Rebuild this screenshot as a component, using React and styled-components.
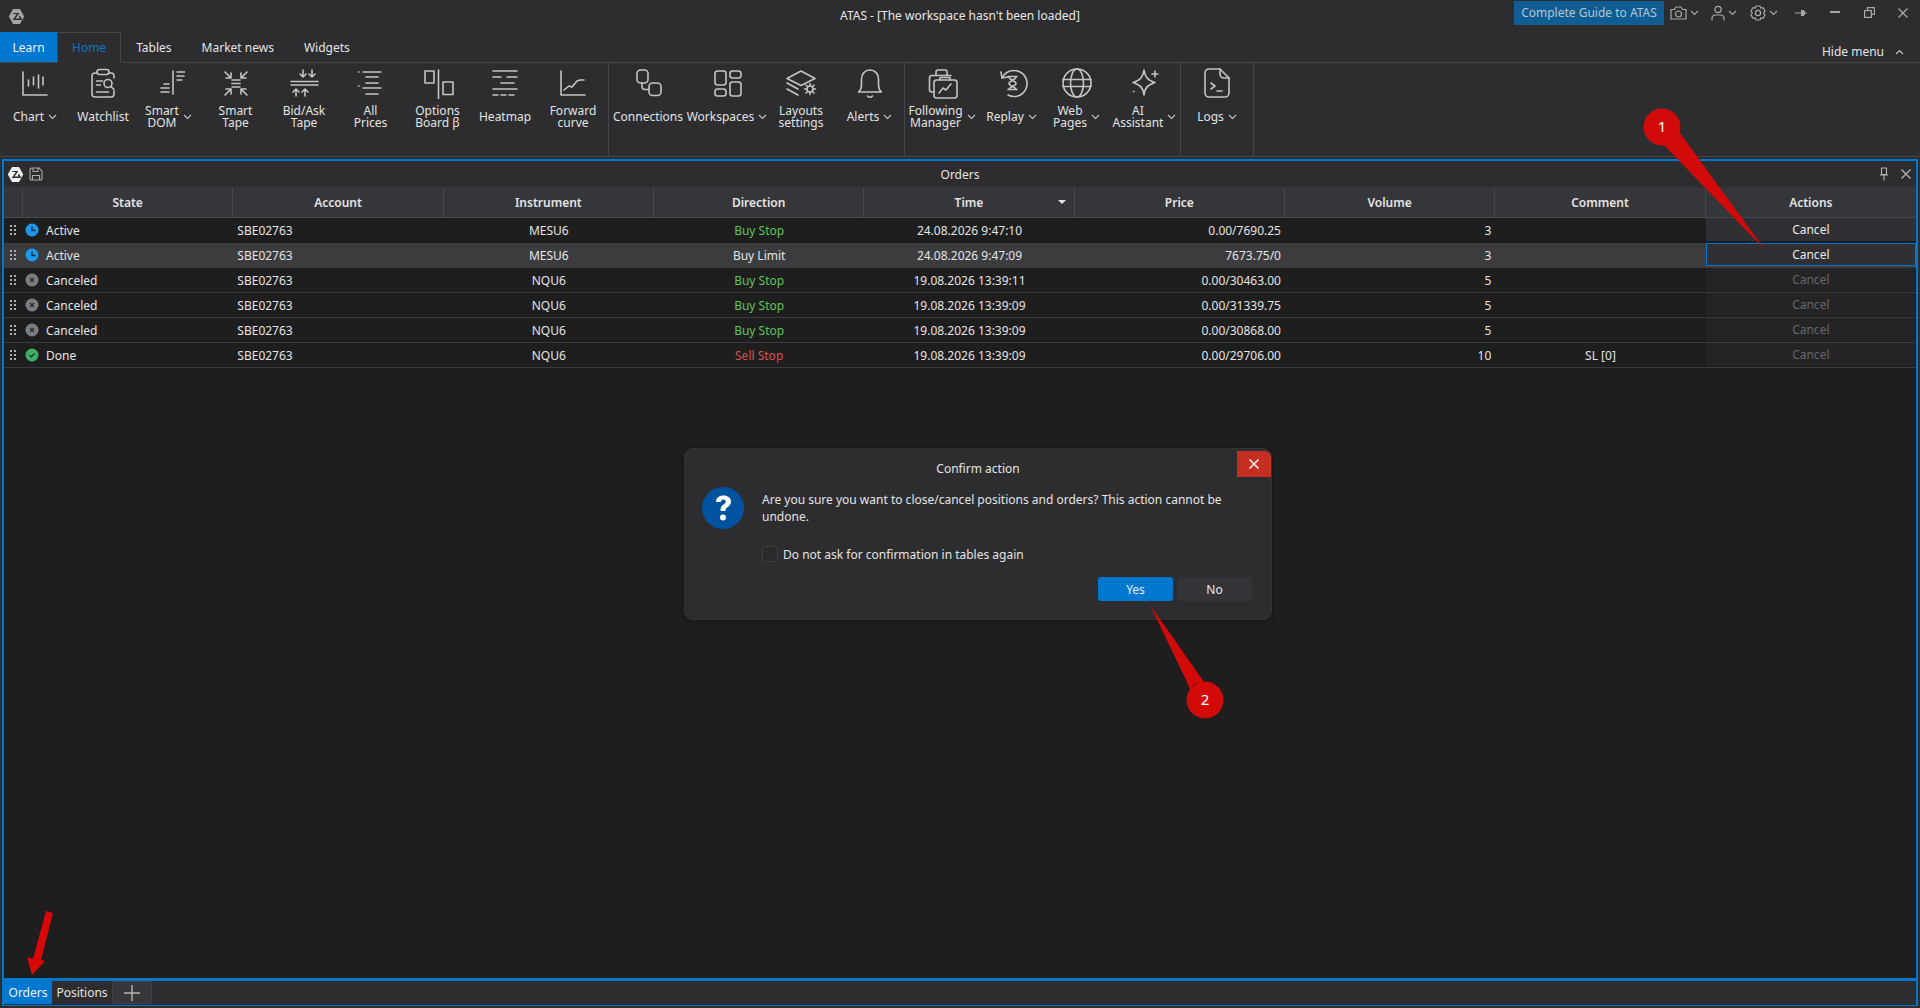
import React from 'react'
import styled, { createGlobalStyle } from 'styled-components'

const GlobalStyle = createGlobalStyle`
html, body {
  margin: 0;
  padding: 0;
  background: #2d2d30;
}
body {
  font-family: "Noto Sans", "Open Sans", sans-serif;
  font-size: 12px;
  color: #e4e4e4;
}
* { box-sizing: border-box; }
`

const Page = styled.div`
position: relative;
width: 1920px;
height: 1008px;
overflow: hidden;
display: flex;
flex-direction: column;
background: #2d2d30;
`
const TitleBar = styled.div`
height: 32px;
display: grid;
grid-template-columns: 1fr auto 1fr;
align-items: center;
`
const TitleLeft = styled.div`
display: flex;
align-items: center;
padding-left: 8px;
`
const TitleText = styled.div`
color: #e8e8e8;
margin-top: -2px;
`
const TitleRight = styled.div`
display: flex;
justify-content: flex-end;
align-items: center;
height: 32px;
padding-bottom: 7px;
`
const GuideButton = styled.div`
width: 150px;
height: 24px;
background: #0f5d92;
color: #b4c6d2;
display: flex;
align-items: center;
justify-content: center;
`
const TitleMenu = styled.div`
width: 40px;
display: flex;
align-items: center;
justify-content: center;
gap: 3px;
`
const WindowButton = styled.div`
width: 34px;
display: flex;
align-items: center;
justify-content: center;
`
const TabRow = styled.div`
height: 31px;
display: flex;
border-bottom: 1px solid #45464a;
`
const Tab = styled.div`
height: 31px;
padding: 0 14px;
display: flex;
align-items: center;
color: ${p => p.$active ? '#0c74c4' : '#e4e4e4'};
background: ${p => p.$active ? '#2d2d30' : 'transparent'};
border: 1px solid ${p => p.$active ? '#45464a' : 'transparent'};
border-bottom-color: ${p => p.$active ? '#2d2d30' : 'transparent'};
`
const LearnTab = styled.div`
width: 57px;
height: 30px;
background: #0078d0;
color: #f2f2f2;
display: flex;
align-items: center;
justify-content: center;
`
const HideMenu = styled.div`
margin-left: auto;
display: flex;
align-items: center;
gap: 11px;
padding: 9px 16px 0 0;
color: #e4e4e4;
`
const Ribbon = styled.div`
height: 94px;
display: flex;
border-bottom: 1px solid #45464a;
`
const RibbonGroup = styled.div`
display: flex;
height: 100%;
border-right: 1px solid #45464a;
`
const RibbonItem = styled.div`
width: ${p => p.$w}px;
display: flex;
flex-direction: column;
align-items: center;
padding-top: 4px;
`
const IconSvg = styled.svg.attrs({ viewBox: '0 0 32 32', fill: 'none' })`
width: 32px;
height: 32px;
stroke: #c4c4c4;
stroke-width: 1.6;
stroke-linecap: round;
stroke-linejoin: round;
flex: none;
`
const RibbonLabel = styled.div`
height: 36px;
display: flex;
align-items: center;
gap: 4px;
line-height: 12px;
text-align: center;
color: #e2e2e2;
white-space: pre-line;
`
const Workspace = styled.div`
flex: none;
height: 847px;
margin: 2px 2px 0;
border: 2px solid #0078d0;
border-bottom-width: 1px;
display: flex;
flex-direction: column;
`
const Panel = styled.div`
flex: 1;
display: flex;
flex-direction: column;
background: #1e1e1e;
border-bottom: 3px solid #0078d0;
`
const PanelHeader = styled.div`
height: 26px;
background: #2d2d30;
display: grid;
grid-template-columns: 1fr auto 1fr;
align-items: center;
`
const PanelTools = styled.div`
display: flex;
align-items: center;
gap: 5px;
padding-left: 3px;
`
const PanelTitle = styled.div`
color: #e2e2e2;
`
const PanelActions = styled.div`
display: flex;
justify-content: flex-end;
align-items: center;
gap: 11px;
padding-right: 5px;
`
const Row = styled.div`
display: grid;
grid-template-columns: 19px repeat(9, 1fr);
height: 25px;
background: ${p => p.$selected ? '#3c3c3f' : '#1e1e1e'};
border-bottom: 1px solid ${p => p.$line ? '#3a3a3c' : 'transparent'};
`
const HeaderRow = styled(Row)`
height: 31px;
background: #35363a;
border-bottom: 1px solid #48494d;
`
const HeaderCell = styled.div`
position: relative;
display: flex;
align-items: center;
justify-content: center;
font-weight: 600;
color: #e4e4e4;
border-right: 1px solid #47484c;
&:last-child { border-right: none; }
`
const SortMark = styled.div`
position: absolute;
right: 8px;
top: 13px;
border-left: 4px solid transparent;
border-right: 4px solid transparent;
border-top: 4px solid #e4e4e4;
`
const Cell = styled.div`
display: flex;
align-items: center;
padding: 0 4px;
color: ${p => p.$color || '#e4e4e4'};
justify-content: ${p => p.$align || 'center'};
`
const StateCell = styled(Cell)`
padding: 0 0 0 2px;
gap: 7px;
justify-content: flex-start;
`
const GripCell = styled(Cell)`
padding: 0 0 0 6px;
justify-content: flex-start;
`
const ActionCell = styled.div`
display: flex;
align-items: center;
justify-content: center;
margin: 0 0 1px;
background: ${p => p.$focus ? '#303034' : p.$off ? '#242426' : '#303034'};
color: ${p => p.$off ? '#666668' : '#e8e8e8'};
border: 1px solid ${p => p.$focus ? '#0078d0' : 'transparent'};
`
const TabBar = styled.div`
height: 24px;
background: #2d2d30;
display: flex;
`
const SheetTab = styled.div`
width: ${p => p.$w}px;
height: 23px;
display: flex;
align-items: center;
justify-content: center;
color: ${p => p.$active ? '#f0f0f0' : '#e4e4e4'};
background: ${p => p.$active ? '#0078d0' : 'transparent'};
`
const AddTab = styled.div`
width: 40px;
height: 23px;
background: #37373b;
border: 1px solid #414145;
display: flex;
align-items: center;
justify-content: center;
`
const Dialog = styled.div`
position: absolute;
left: 684px;
top: 448px;
width: 588px;
height: 172px;
background: #2d2d30;
border: 1px solid #333336;
border-radius: 9px;
box-shadow: 0 0 6px rgba(0, 0, 0, 0.35);
display: flex;
flex-direction: column;
`
const DialogClose = styled.div`
position: absolute;
top: 2px;
right: 0;
width: 34px;
height: 26px;
background: #c42f20;
border-top-right-radius: 6px;
display: flex;
align-items: center;
justify-content: center;
`
const DialogTitle = styled.div`
height: 36px;
padding-top: 2px;
display: flex;
align-items: center;
justify-content: center;
color: #e4e4e4;
`
const DialogBody = styled.div`
display: flex;
align-items: center;
gap: 18px;
padding: 0 0 0 17px;
height: 44px;
margin-top: 1px;
`
const DialogCheckRow = styled.div`
display: flex;
align-items: center;
gap: 5px;
padding-left: 77px;
margin-top: 1px;
height: 24px;
margin-top: 12px;
`
const CheckBox = styled.div`
width: 16px;
height: 16px;
border: 1px solid #3f3f43;
border-radius: 3px;
background: #2a2a2d;
`
const DialogButtons = styled.div`
display: flex;
justify-content: flex-end;
gap: 4px;
padding-right: 19px;
margin-top: 11px;
`
const DialogButton = styled.div`
width: 75px;
height: 24px;
border-radius: 3px;
display: flex;
align-items: center;
justify-content: center;
background: ${p => p.$primary ? '#0078d0' : '#343438'};
color: #ececec;
`
const Annotations = styled.svg`
position: absolute;
left: 0;
top: 0;
width: 1920px;
height: 1008px;
pointer-events: none;
`
const PinNumber = styled.text`
fill: #fff;
font-size: 15px;
font-family: "Noto Sans", sans-serif;
text-anchor: middle;
`

const Chevron = ({ up, color = '#c4c4c4' }) => (
  <svg width="9" height="6" viewBox="0 0 9 6" fill="none" style={{ flex: 'none' }}>
    <path d={up ? 'M1 5l3.5-3.5L8 5' : 'M1 1l3.5 3.5L8 1'} stroke={color} strokeWidth="1.1" />
  </svg>
)

const Logo = ({ color }) => (
  <svg width="17" height="17" viewBox="0 0 17 17">
    <path d="M5 1h7l4.2 7.5L12 16H5L.8 8.500z" fill={color} />
    <path d="M5.500 5h5.800L7.500 10.500h4.200l-.9-1.700 1.500-.8 2 4H4.800l4-6H5z" fill="#2d2d30" />
  </svg>
)

const icons = {
  chart: <><path d="M4 5v23h24" /><path d="M9.500 13v6M14.500 10v8M19.500 8v13M24 10v8" /></>,
  watchlist: <><path d="M10 6H8a3 3 0 0 0-3 3v18a3 3 0 0 0 3 3h16a3 3 0 0 0 3-3v-3M22 6h2a3 3 0 0 1 3 3v2" /><rect x="10" y="2.500" width="12" height="5" rx="2.500" /><path d="M9.500 14h6M9.500 18h4M9.500 25h12" /><circle cx="21" cy="16.500" r="4" /><path d="M24 19.500l3 3" /></>,
  smartDom: <><path d="M20 4v23" /><path d="M24 5h8M24 9h7M24 13h5M11 17h5M8 21h8M8 25h8" /></>,
  smartTape: <><path d="M5 5l6 6M6 11h5V6M27 5l-6 6M26 11h-5V6M5 28l6-6M6 22h5v5M27 28l-6-6M26 22h-5v5" /><path d="M12 13h8M12 16.500h8M12 20h8" /></>,
  bidAsk: <><path d="M3 14.500h27M3 18h27" /><path d="M15 3v7M12 7l3 3 3-3M24 3v7M21 7l3 3 3-3M8 29v-7M5 25l3-3 3 3M17 29v-7M14 25l3-3 3 3" /></>,
  allPrices: <><path d="M8 5h18M11 10h12M11 16h12M8 21h18M11 27h12" /><path d="M3.500 5h.5M3.500 19h.5" /></>,
  options: <><rect x="3" y="4" width="9" height="12" /><path d="M16.500 3v29" /><rect x="21" y="15" width="10" height="12.500" /></>,
  heatmap: <><path d="M4 4h24M4 10h8M18 10h10M12 16h13M4 22h24M4 28h5M12 28h5M20 28h5" /></>,
  forward: <><path d="M4 4v24h24" /><path d="M7 23l5-4 3 1 5-6 3-1h4" /></>,
  connections: <><rect x="5" y="3" width="11" height="13" rx="3.500" /><rect x="17" y="16" width="12" height="12.500" rx="3.500" /><path d="M10 16v3.500c0 2 1 3 3 3h4" /></>,
  workspaces: <><rect x="4" y="4" width="11" height="14" rx="2.500" /><rect x="19" y="4" width="11" height="7" rx="2.500" /><rect x="4" y="22" width="11" height="7" rx="2.500" /><rect x="19" y="15" width="11" height="14" rx="2.500" /></>,
  layouts: <><path d="M16 4l14 7.500-14 7-14-7z" /><path d="M2 16l11 6M2 22l11 6M2 28" /><circle cx="25" cy="22" r="3" /><path d="M25 16.500v2M25 25.500v2M19.500 22h2M28.500 22h2M21 18l1.500 1.500M27.500 24.500L29 26M21 26l1.500-1.500M27.500 19.500L29 18" /></>,
  alerts: <><path d="M4.500 25c2.500-2 3-4 3-7v-6c0-5 3.500-9 8.500-9s8.500 4 8.500 9v6c0 3 .5 5 3 7z" /><path d="M13.500 29c1.500 1.500 3.500 1.500 5 0" /></>,
  following: <><path d="M8 25H6a2.500 2.500 0 0 1-2.500-2.500V11A2.500 2.500 0 0 1 6 8.500h19" /><path d="M10 8V5a2 2 0 0 1 2-2h7a2 2 0 0 1 2 2v3" /><rect x="8" y="13" width="23" height="18" rx="2.500" /><path d="M14 13v-2.500h10V13" /><path d="M13 26l4-5 3 2 5-6" /></>,
  replay: <><path d="M5 5l1 6 6-1" /><path d="M6.500 10.500A13 13 0 1 1 12 28" /><path d="M12 9.500h9M12 22.500h9M13 10c0 3 7 4 7 6.500s-7 3.500-7 6M20 10c0 3-7 4-7 6.500s7 3.500 7 6" /></>,
  web: <><circle cx="16" cy="16" r="14" /><path d="M2 12.500h28M2 19.500h28" /><ellipse cx="16" cy="16" rx="6.500" ry="14" /></>,
  ai: <><path d="M15 3c1 7 3.500 10 11 12.500-7.500 2.500-10 5-11 12.500-1-7.500-3.500-10-11-12.500C11.500 13 14 10 15 3z" /><path d="M26 4v6M23 7h6" /><path d="M4.500 24.500h.5" /></>,
  logs: <><path d="M19 2H8a4 4 0 0 0-4 4v20a4 4 0 0 0 4 4h16a4 4 0 0 0 4-4V11z" /><path d="M19 2v5a4 4 0 0 0 4 4h5" /><path d="M10 16l4 3-4 3M16 24h5" /></>,
}

const groups = [
  [
    { w: 70, icon: 'chart', label: 'Chart', menu: true },
    { w: 66, icon: 'watchlist', label: 'Watchlist' },
    { w: 65, icon: 'smartDom', label: 'Smart\nDOM', menu: true },
    { w: 69, icon: 'smartTape', label: 'Smart\nTape' },
    { w: 68, icon: 'bidAsk', label: 'Bid/Ask\nTape' },
    { w: 65, icon: 'allPrices', label: 'All\nPrices' },
    { w: 69, icon: 'options', label: 'Options\nBoard β' },
    { w: 66, icon: 'heatmap', label: 'Heatmap' },
    { w: 70, icon: 'forward', label: 'Forward\ncurve' },
  ],
  [
    { w: 78, icon: 'connections', label: 'Connections' },
    { w: 80, icon: 'workspaces', label: 'Workspaces', menu: true },
    { w: 68, icon: 'layouts', label: 'Layouts\nsettings' },
    { w: 69, icon: 'alerts', label: 'Alerts', menu: true },
  ],
  [
    { w: 74, icon: 'following', label: 'Following\nManager', menu: true },
    { w: 65, icon: 'replay', label: 'Replay', menu: true },
    { w: 65, icon: 'web', label: 'Web\nPages', menu: true },
    { w: 71, icon: 'ai', label: 'AI\nAssistant', menu: true },
  ],
  [
    { w: 72, icon: 'logs', label: 'Logs', menu: true },
  ],
]

const columns = ['State', 'Account', 'Instrument', 'Direction', 'Time', 'Price', 'Volume', 'Comment', 'Actions']

const orders = [
  { state: 'active', label: 'Active', inst: 'MESU6', dir: 'Buy Stop', time: '24.08.2026 9:47:10', price: '0.00/7690.25', vol: 3 },
  { state: 'active', label: 'Active', inst: 'MESU6', dir: 'Buy Limit', time: '24.08.2026 9:47:09', price: '7673.75/0', vol: 3, selected: true },
  { state: 'canceled', label: 'Canceled', inst: 'NQU6', dir: 'Buy Stop', time: '19.08.2026 13:39:11', price: '0.00/30463.00', vol: 5 },
  { state: 'canceled', label: 'Canceled', inst: 'NQU6', dir: 'Buy Stop', time: '19.08.2026 13:39:09', price: '0.00/31339.75', vol: 5 },
  { state: 'canceled', label: 'Canceled', inst: 'NQU6', dir: 'Buy Stop', time: '19.08.2026 13:39:09', price: '0.00/30868.00', vol: 5 },
  { state: 'done', label: 'Done', inst: 'NQU6', dir: 'Sell Stop', time: '19.08.2026 13:39:09', price: '0.00/29706.00', vol: 10, comment: 'SL [0]' },
]

const dirColor = d => d === 'Buy Stop' ? '#5fc45a' : d === 'Sell Stop' ? '#d9534f' : '#e4e4e4'

function Grip() {
  return (
    <svg width="6" height="12" viewBox="0 0 6 12" fill="#b0b0b0">
      <rect x="0" y="1" width="2" height="2" /><rect x="4" y="1" width="2" height="2" />
      <rect x="0" y="5" width="2" height="2" /><rect x="4" y="5" width="2" height="2" />
      <rect x="0" y="9" width="2" height="2" /><rect x="4" y="9" width="2" height="2" />
    </svg>
  )
}

function StateIcon({ state }) {
  if (state === 'active') {
    return (
      <svg width="14" height="14" viewBox="0 0 14 14">
        <circle cx="7" cy="7" r="6.500" fill="#1a9bf0" />
        <path d="M7 3.500V7.500H10.500" stroke="#16263a" strokeWidth="1.300" fill="none" />
      </svg>
    )
  }
  if (state === 'canceled') {
    return (
      <svg width="14" height="14" viewBox="0 0 14 14">
        <circle cx="7" cy="7" r="6.500" fill="#7c7f82" />
        <path d="M5 5l4 4M9 5l-4 4" stroke="#26282a" strokeWidth="1.200" />
      </svg>
    )
  }
  return (
    <svg width="14" height="14" viewBox="0 0 14 14">
      <circle cx="7" cy="7" r="6.500" fill="#3fae67" />
      <path d="M4.500 7.200l1.800 1.800 3.400-3.600" stroke="#16301f" strokeWidth="1.200" fill="none" />
    </svg>
  )
}

function TitleIcons() {
  const s = { stroke: '#a8a8a8', strokeWidth: 1.2, fill: 'none' }
  return (
    <>
      <TitleMenu>
        <svg width="17" height="14" viewBox="0 0 17 14" {...s}>
          <path d="M1 3.500h3.500L6 1h5l1.500 2.500H16v9.500H1z" /><circle cx="8.500" cy="8" r="3" />
        </svg>
        <Chevron color="#a8a8a8" />
      </TitleMenu>
      <TitleMenu>
        <svg width="14" height="16" viewBox="0 0 14 16" {...s}>
          <circle cx="7" cy="4.500" r="3.200" /><path d="M1 15.500v-2c0-2 1.500-3.500 3.500-3.500h5c2 0 3.500 1.500 3.500 3.500v2" />
        </svg>
        <Chevron color="#a8a8a8" />
      </TitleMenu>
      <TitleMenu>
        <svg width="16" height="16" viewBox="0 0 16 16" {...s}>
          <path d="M6 1h4l.8 2 2.200-.3L15 6l-1.300 2L15 10l-2 3.300-2.200-.3-.8 2H6l-.8-2-2.200.3L1 10l1.300-2L1 6l2-3.300 2.200.3z" /><circle cx="8" cy="8" r="2.600" />
        </svg>
        <Chevron color="#a8a8a8" />
      </TitleMenu>
      <WindowButton>
        <svg width="12" height="8" viewBox="0 0 12 8" fill="#a8a8a8">
          <rect x="0" y="3.500" width="12" height="1" /><rect x="6" y="1" width="3" height="6" /><rect x="9" y="2" width="1" height="4" />
        </svg>
      </WindowButton>
      <WindowButton>
        <svg width="10" height="3" viewBox="0 0 10 3"><rect width="10" height="2" fill="#a8a8a8" /></svg>
      </WindowButton>
      <WindowButton>
        <svg width="11" height="11" viewBox="0 0 11 11" {...s}>
          <rect x=".600" y="3.600" width="6.800" height="6.800" /><path d="M3.500 3.500V.6h6.900v6.800H7.500" />
        </svg>
      </WindowButton>
      <WindowButton>
        <svg width="10" height="10" viewBox="0 0 10 10" stroke="#a8a8a8" strokeWidth="1.300">
          <path d="M.5.500l9 9M9.500.500l-9 9" />
        </svg>
      </WindowButton>
    </>
  )
}

export default function App() {
  return (
    <Page>
      <GlobalStyle />
      <TitleBar>
        <TitleLeft><Logo color="#a4a4a4" /></TitleLeft>
        <TitleText>ATAS - [The workspace hasn't been loaded]</TitleText>
        <TitleRight>
          <GuideButton>Complete Guide to ATAS</GuideButton>
          <TitleIcons />
        </TitleRight>
      </TitleBar>
      <TabRow>
        <LearnTab>Learn</LearnTab>
        <Tab $active>Home</Tab>
        <Tab>Tables</Tab>
        <Tab>Market news</Tab>
        <Tab>Widgets</Tab>
        <HideMenu>Hide menu <Chevron up /></HideMenu>
      </TabRow>
      <Ribbon>
        {groups.map((items, g) => (
          <RibbonGroup key={g}>
            {items.map(item => (
              <RibbonItem key={item.label} $w={item.w}>
                <IconSvg>{icons[item.icon]}</IconSvg>
                <RibbonLabel>
                  <span>{item.label}</span>
                  {item.menu && <Chevron />}
                </RibbonLabel>
              </RibbonItem>
            ))}
          </RibbonGroup>
        ))}
      </Ribbon>
      <Workspace>
        <Panel>
          <PanelHeader>
            <PanelTools>
              <Logo color="#efefef" />
              <svg width="14" height="14" viewBox="0 0 14 14" fill="none" stroke="#a8a8a8" strokeWidth="1.100">
                <path d="M1 3a2 2 0 0 1 2-2h7l3 3v7a2 2 0 0 1-2 2H3a2 2 0 0 1-2-2z" />
                <path d="M4 1v3.500h5V1M3.500 13V8.500h7V13" />
              </svg>
            </PanelTools>
            <PanelTitle>Orders</PanelTitle>
            <PanelActions>
              <svg width="12" height="14" viewBox="0 0 12 14" fill="none" stroke="#b4b4b4" strokeWidth="1.100">
                <path d="M3.500 1h5v6.500h-5zM2 8h8M6 8v5.500" />
              </svg>
              <svg width="10" height="10" viewBox="0 0 10 10" stroke="#b4b4b4" strokeWidth="1.300">
                <path d="M.5.500l9 9M9.500.500l-9 9" />
              </svg>
            </PanelActions>
          </PanelHeader>
          <HeaderRow>
            <HeaderCell />
            {columns.map(c => (
              <HeaderCell key={c}>
                {c}
                {c === 'Time' && <SortMark />}
              </HeaderCell>
            ))}
          </HeaderRow>
          {orders.map((o, i) => (
            <Row key={i} $selected={o.selected} $line={i > 1}>
              <GripCell><Grip /></GripCell>
              <StateCell>
                <StateIcon state={o.state} />
                {o.label}
              </StateCell>
              <Cell $align="flex-start">SBE02763</Cell>
              <Cell>{o.inst}</Cell>
              <Cell $color={dirColor(o.dir)}>{o.dir}</Cell>
              <Cell>{o.time}</Cell>
              <Cell $align="flex-end">{o.price}</Cell>
              <Cell $align="flex-end">{o.vol}</Cell>
              <Cell>{o.comment}</Cell>
              <ActionCell $focus={o.selected} $off={i > 1}>Cancel</ActionCell>
            </Row>
          ))}
        </Panel>
        <TabBar>
          <SheetTab $w={48} $active>Orders</SheetTab>
          <SheetTab $w={60}>Positions</SheetTab>
          <AddTab>
            <svg width="16" height="16" viewBox="0 0 16 16" stroke="#b4b4b4" strokeWidth="1.400">
              <path d="M8 0v16M0 8h16" />
            </svg>
          </AddTab>
        </TabBar>
      </Workspace>

      <Dialog>
        <DialogClose>
          <svg width="10" height="10" viewBox="0 0 10 10" stroke="#f4f4f4" strokeWidth="1.500">
            <path d="M.5.500l9 9M9.500.500l-9 9" />
          </svg>
        </DialogClose>
        <DialogTitle>Confirm action</DialogTitle>
        <DialogBody>
          <svg width="42" height="42" viewBox="0 0 42 42" style={{ flex: 'none' }}>
            <circle cx="21" cy="21" r="21" fill="#02539f" />
            <path d="M14 15c0-4 3-6.500 7.500-6.500S29 11 29 14.500c0 3-1.800 4.500-3.500 5.700-1.500 1-2 1.800-2 3.800h-5c0-3.500 1-5 3-6.400 1.300-.9 2.200-1.600 2.200-3 0-1.200-.9-2-2.300-2s-2.400 1-2.400 2.500z" fill="#fff" />
            <circle cx="21" cy="30.500" r="3" fill="#fff" />
          </svg>
          <span>Are you sure you want to close/cancel positions and orders? This action cannot be undone.</span>
        </DialogBody>
        <DialogCheckRow>
          <CheckBox />
          <span>Do not ask for confirmation in tables again</span>
        </DialogCheckRow>
        <DialogButtons>
          <DialogButton $primary>Yes</DialogButton>
          <DialogButton>No</DialogButton>
        </DialogButtons>
      </Dialog>

      <Annotations viewBox="0 0 1920 1008">
        <circle cx="1662" cy="127" r="18.500" fill="#d20a0a" />
        <path d="M1680 133L1765 250L1664 145z" fill="#d20a0a" />
        <PinNumber x="1662" y="132">1</PinNumber>
        <circle cx="1205" cy="700" r="18.500" fill="#d20a0a" />
        <path d="M1150 605L1187 682L1190 690L1194 684L1204 682z" fill="#d20a0a" />
        <PinNumber x="1205" y="705">2</PinNumber>
        <path d="M46 911L53 913L41 960L45 961L32 975L27 957L33 959z" fill="#d90808" />
      </Annotations>
    </Page>
  )
}
